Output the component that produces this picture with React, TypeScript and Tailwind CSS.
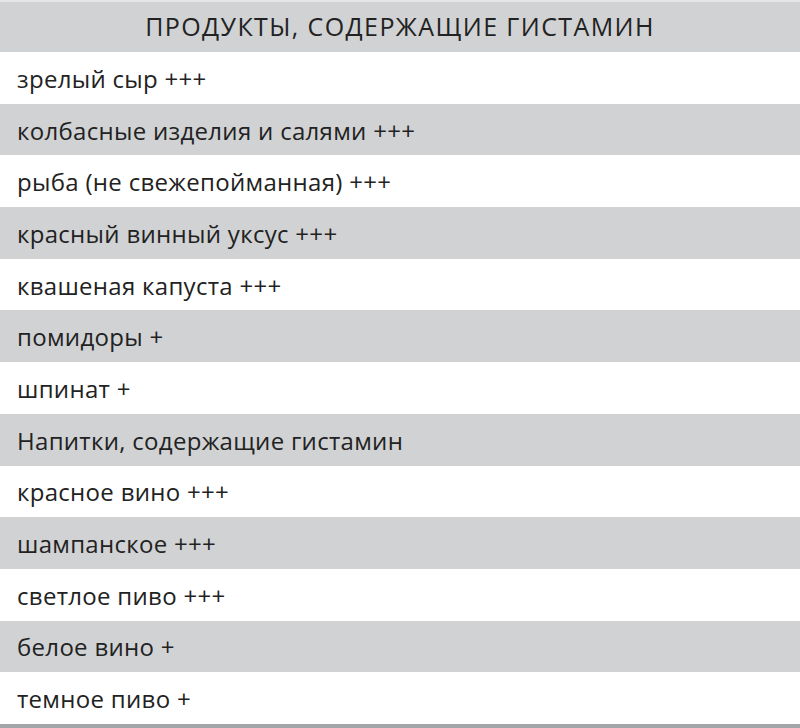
const rows = [
  "зрелый сыр +++",
  "колбасные изделия и салями +++",
  "рыба (не свежепойманная) +++",
  "красный винный уксус +++",
  "квашеная капуста +++",
  "помидоры +",
  "шпинат +",
  "Напитки, содержащие гистамин",
  "красное вино +++",
  "шампанское +++",
  "светлое пиво +++",
  "белое вино +",
  "темное пиво +",
];

export default function App() {
  return (
    <div className="w-[800px] h-[728px] bg-white text-[#222] font-['Open_Sans',sans-serif] overflow-hidden">
      <div className="h-[52px] bg-[#d1d2d4] border-t-2 border-[#e4e5e6] flex items-center justify-center text-[25px] tracking-[1.4px]">
        ПРОДУКТЫ, СОДЕРЖАЩИЕ ГИСТАМИН
      </div>
      {rows.map((r, i) => (
        <div
          key={i}
          className={
            "h-[51.7px] flex items-center pl-[17px] pt-[2px] text-[24px] tracking-[0.3px] " +
            (i % 2 === 1 ? "bg-[#d1d2d4]" : "bg-white")
          }
        >
          {r}
        </div>
      ))}
      <div className="h-[4px] bg-[#a4a5a6]" />
    </div>
  );
}
